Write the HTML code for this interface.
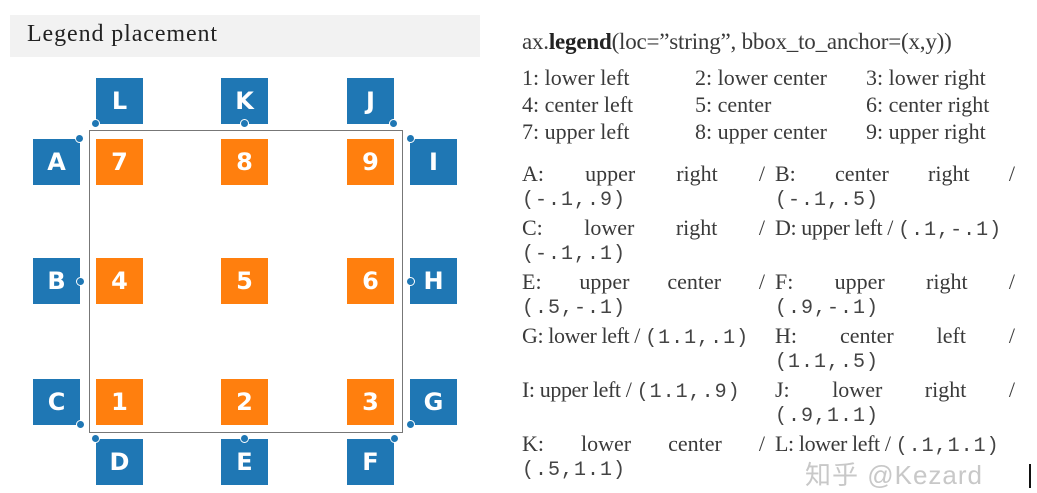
<!DOCTYPE html>
<html><head><meta charset="utf-8"><style>
body{margin:0;width:1037px;height:493px;background:#fff;position:relative;overflow:hidden;font-family:"Liberation Serif",serif;color:#3a3a3a}
.a{position:absolute}
.hdr{left:10px;top:15px;width:470px;height:42px;background:#f2f2f2}
.title{left:27px;top:19px;font-size:24px;line-height:30px;color:#222;letter-spacing:0.9px}
.b{position:absolute;width:47px;height:46px;color:#fff;font:bold 24px/46px "DejaVu Sans","Liberation Sans",sans-serif;text-align:center}
.bl{background:#1f77b4}.or{background:#ff7f0e}
.frame{left:89px;top:130px;width:312px;height:301px;border:1.5px solid #777}
.dot{position:absolute;width:7px;height:7px;border-radius:50%;background:#1f77b4;border:1.5px solid #fff;margin:-5px 0 0 -5px}
.t{position:absolute;font-size:22px;line-height:26px;white-space:nowrap}
.j{display:flex;justify-content:space-between}
.m{font-family:"Liberation Mono",monospace;font-size:20px;letter-spacing:1px;color:#444}
.wm{left:805px;top:455px;font-size:26px;color:#c8c8c8;font-family:"Liberation Sans","Noto Sans CJK SC",sans-serif;letter-spacing:1px}
</style></head><body>
<div class="a hdr"></div>
<div class="a title">Legend placement</div>
<div class="a frame"></div>

<div class="b bl" style="left:96px;top:78px">L</div>
<div class="b bl" style="left:221px;top:78px">K</div>
<div class="b bl" style="left:347px;top:78px">J</div>
<div class="b bl" style="left:33px;top:139px">A</div>
<div class="b or" style="left:96px;top:139px">7</div>
<div class="b or" style="left:221px;top:139px">8</div>
<div class="b or" style="left:347px;top:139px">9</div>
<div class="b bl" style="left:410px;top:139px">I</div>
<div class="b bl" style="left:33px;top:258px">B</div>
<div class="b or" style="left:96px;top:258px">4</div>
<div class="b or" style="left:221px;top:258px">5</div>
<div class="b or" style="left:347px;top:258px">6</div>
<div class="b bl" style="left:410px;top:258px">H</div>
<div class="b bl" style="left:33px;top:379px">C</div>
<div class="b or" style="left:96px;top:379px">1</div>
<div class="b or" style="left:221px;top:379px">2</div>
<div class="b or" style="left:347px;top:379px">3</div>
<div class="b bl" style="left:410px;top:379px">G</div>
<div class="b bl" style="left:96px;top:439px">D</div>
<div class="b bl" style="left:221px;top:439px">E</div>
<div class="b bl" style="left:347px;top:439px">F</div>

<div class="dot" style="left:96px;top:124px"></div>
<div class="dot" style="left:245px;top:124px"></div>
<div class="dot" style="left:394px;top:124px"></div>
<div class="dot" style="left:80px;top:139px"></div>
<div class="dot" style="left:411px;top:139px"></div>
<div class="dot" style="left:81px;top:282px"></div>
<div class="dot" style="left:411px;top:282px"></div>
<div class="dot" style="left:81px;top:425px"></div>
<div class="dot" style="left:411px;top:425px"></div>
<div class="dot" style="left:96px;top:439px"></div>
<div class="dot" style="left:245px;top:439px"></div>
<div class="dot" style="left:395px;top:439px"></div>

<div class="t" style="left:522px;top:29px;font-size:23px;letter-spacing:-0.2px">ax.<b style="color:#222">legend</b>(loc=”string”, bbox_to_anchor=(x,y))</div>
<div class="t" style="left:522px;top:65px">1: lower left</div>
<div class="t" style="left:695px;top:65px">2: lower center</div>
<div class="t" style="left:866px;top:65px">3: lower right</div>
<div class="t" style="left:522px;top:92px">4: center left</div>
<div class="t" style="left:695px;top:92px">5: center</div>
<div class="t" style="left:866px;top:92px">6: center right</div>
<div class="t" style="left:522px;top:119px">7: upper left</div>
<div class="t" style="left:695px;top:119px">8: upper center</div>
<div class="t" style="left:866px;top:119px">9: upper right</div>

<div class="t j" style="left:522px;top:161px;width:243px"><span>A:</span><span>upper</span><span>right</span><span>/</span></div>
<div class="t m" style="left:522px;top:188px">(-.1,.9)</div>
<div class="t j" style="left:522px;top:215px;width:243px"><span>C:</span><span>lower</span><span>right</span><span>/</span></div>
<div class="t m" style="left:522px;top:242px">(-.1,.1)</div>
<div class="t j" style="left:522px;top:269px;width:243px"><span>E:</span><span>upper</span><span>center</span><span>/</span></div>
<div class="t m" style="left:522px;top:296px">(.5,-.1)</div>
<div class="t" style="left:522px;top:323px;letter-spacing:-0.4px">G: lower left / <span class="m">(1.1,.1)</span></div>
<div class="t" style="left:522px;top:377px;letter-spacing:-0.4px">I: upper left / <span class="m">(1.1,.9)</span></div>
<div class="t j" style="left:522px;top:431px;width:243px"><span>K:</span><span>lower</span><span>center</span><span>/</span></div>
<div class="t m" style="left:522px;top:458px">(.5,1.1)</div>

<div class="t j" style="left:775px;top:161px;width:240px"><span>B:</span><span>center</span><span>right</span><span>/</span></div>
<div class="t m" style="left:775px;top:188px">(-.1,.5)</div>
<div class="t" style="left:775px;top:215px;letter-spacing:-0.4px">D: upper left / <span class="m">(.1,-.1)</span></div>
<div class="t j" style="left:775px;top:269px;width:240px"><span>F:</span><span>upper</span><span>right</span><span>/</span></div>
<div class="t m" style="left:775px;top:296px">(.9,-.1)</div>
<div class="t j" style="left:775px;top:323px;width:240px"><span>H:</span><span>center</span><span>left</span><span>/</span></div>
<div class="t m" style="left:775px;top:350px">(1.1,.5)</div>
<div class="t j" style="left:775px;top:377px;width:240px"><span>J:</span><span>lower</span><span>right</span><span>/</span></div>
<div class="t m" style="left:775px;top:404px">(.9,1.1)</div>
<div class="t" style="left:775px;top:431px;letter-spacing:-0.4px">L: lower left / <span class="m">(.1,1.1)</span></div>

<div class="a wm">知乎 @Kezard</div>
<div class="a" style="left:1029px;top:464px;width:2px;height:24px;background:#111"></div>
</body></html>
